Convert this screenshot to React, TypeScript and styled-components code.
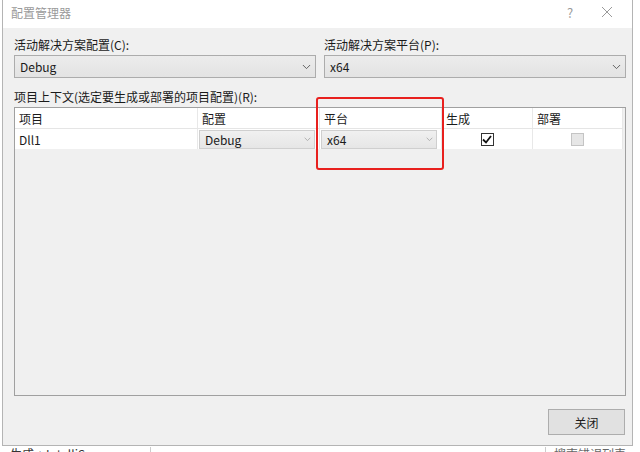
import React from 'react'
import styled, { createGlobalStyle } from 'styled-components'

const GlobalStyle = createGlobalStyle`
  html, body {
    margin: 0;
    padding: 0;
    background: #ffffff;
    overflow: hidden;
  }
  body {
    font-family: "Segoe UI", "Noto Sans CJK SC", "Noto Sans", sans-serif;
    font-size: 12px;
    color: #1a1a1a;
  }
`

// ---------- types ----------
type Column = { title: string }

type ProjectRow = {
  name: string
  config: string
  platform: string
  build: boolean
  deploy: boolean
}

const columns: Column[] = [
  { title: '项目' },
  { title: '配置' },
  { title: '平台' },
  { title: '生成' },
  { title: '部署' }
]

const rows: ProjectRow[] = [
  { name: 'Dll1', config: 'Debug', platform: 'x64', build: true, deploy: false }
]

// ---------- layout ----------
const Screen = styled.div`
  width: 640px;
  height: 452px;
  display: flex;
  flex-direction: column;
  overflow: hidden;
`

const Window = styled.div`
  position: relative;
  margin-left: 2px;
  width: 629px;
  height: 445px;
  flex-shrink: 0;
  display: flex;
  flex-direction: column;
  border: 1px solid #b4b4b4;
  border-top: none;
  background: #f0f0f0;
`

const TitleBar = styled.div`
  height: 28px;
  background: #ffffff;
  display: flex;
  align-items: center;
  padding-left: 8px;
  flex-shrink: 0;
`

const Title = styled.div`
  flex: 1;
  color: #9a9a9a;
  font-size: 12px;
  margin-top: -4px;
`

const TitleButton = styled.div<{ $w: number }>`
  width: ${p => p.$w}px;
  height: 28px;
  display: flex;
  align-items: center;
  justify-content: center;
  color: #9a9a9a;
  font-size: 13px;
  margin-top: -4px;
`

const Body = styled.div`
  flex: 1;
  display: flex;
  flex-direction: column;
  padding: 8px 5px 11px 11px;
`

const TopRow = styled.div`
  display: grid;
  grid-template-columns: 302px 302px;
  column-gap: 8px;
`

const Field = styled.div`
  display: flex;
  flex-direction: column;
`

const Label = styled.div`
  height: 17px;
  line-height: 17px;
  margin-bottom: 2px;
  white-space: nowrap;
`

const Combo = styled.div`
  height: 21px;
  border: 1px solid #acacac;
  background: linear-gradient(#ececec, #e3e3e3);
  display: flex;
  align-items: center;
  padding-left: 5px;
  padding-right: 4px;
  font-size: 12px;
`

const ComboText = styled.div`
  flex: 1;
`

const ContextLabel = styled(Label)`
  margin-top: 10px;
  margin-bottom: 2px;
`

const Grid = styled.div`
  width: 610px;
  height: 287px;
  border: 1px solid #a0a0a0;
  background: #f0f0f0;
  display: flex;
  flex-direction: column;
`

const GridRow = styled.div<{ $header?: boolean }>`
  display: grid;
  grid-template-columns: 183px 122px 122px 91px 1fr;
  height: 20px;
  background: #ffffff;
  margin-right: 2px;
  border-bottom: 1px solid ${p => (p.$header ? '#e5e5e5' : '#f0f0f0')};
`

const Cell = styled.div<{ $center?: boolean }>`
  display: flex;
  align-items: center;
  justify-content: ${p => (p.$center ? 'center' : 'flex-start')};
  padding-left: ${p => (p.$center ? 0 : 4)}px;
  border-right: 1px solid #e8e8e8;
  overflow: hidden;
  white-space: nowrap;
`

const CellCombo = styled.div`
  flex: 1;
  height: 17px;
  margin: 0 4px 0 -3px;
  border: 1px solid #cfcfcf;
  background: linear-gradient(#f0f0f0, #e6e6e6);
  display: flex;
  align-items: center;
  padding-left: 5px;
  padding-right: 3px;
`

const Check = styled.div<{ $disabled?: boolean }>`
  width: 11px;
  height: 11px;
  border: 1px solid ${p => (p.$disabled ? '#c4c4c4' : '#333333')};
  background: ${p => (p.$disabled ? '#e6e6e6' : '#ffffff')};
  display: flex;
  align-items: center;
  justify-content: center;
`

const Footer = styled.div`
  display: flex;
  justify-content: flex-end;
  margin-top: 13px;
  padding-right: 2px;
`

const Button = styled.div`
  width: 75px;
  height: 24px;
  border: 1px solid #adadad;
  background: #e1e1e1;
  display: flex;
  align-items: center;
  justify-content: center;
`

// red annotation drawn over the screenshot
const Highlight = styled.div`
  position: absolute;
  left: 313px;
  top: 97px;
  width: 124px;
  height: 69px;
  border: 2.5px solid #e8201e;
  border-radius: 3px;
  pointer-events: none;
`

// what shows of the IDE behind the dialog
const BackStrip = styled.div`
  height: 7px;
  display: flex;
  justify-content: space-between;
  overflow: hidden;
  background: #ffffff;
`

const BackCombo = styled.div`
  width: 140px;
  border-right: 1px solid #cccccc;
  padding-left: 10px;
  font-size: 12px;
  line-height: 13px;
  color: #333;
  white-space: nowrap;
  margin-top: 1px;
`

const BackSearch = styled.div`
  width: 86px;
  border-left: 1px solid #cccccc;
  padding-left: 8px;
  font-size: 12px;
  line-height: 13px;
  color: #666;
  white-space: nowrap;
  margin-top: 1px;
`

const Chevron = ({ size = 9, color = '#555' }: { size?: number; color?: string }) => (
  <svg width={size} height={size / 1.6} viewBox='0 0 10 6'>
    <path d='M1 1 L5 5 L9 1' fill='none' stroke={color} strokeWidth='1' />
  </svg>
)

const CheckMark = () => (
  <svg width='10' height='9' viewBox='0 0 10 9'>
    <path d='M1 4.5 L4 7.5 L9 1' fill='none' stroke='#111' strokeWidth='1.8' />
  </svg>
)

const CloseX = () => (
  <svg width='12' height='12' viewBox='0 0 12 12'>
    <path d='M1 1 L11 11 M11 1 L1 11' stroke='#9a9a9a' strokeWidth='1' />
  </svg>
)

const App = () => {
  return (
    <Screen>
      <GlobalStyle />
      <Window>
        <TitleBar>
          <Title>配置管理器</Title>
          <TitleButton $w={24}>?</TitleButton>
          <TitleButton $w={50}>
            <CloseX />
          </TitleButton>
        </TitleBar>
        <Body>
          <TopRow>
            <Field>
              <Label>活动解决方案配置(C):</Label>
              <Combo>
                <ComboText>Debug</ComboText>
                <Chevron />
              </Combo>
            </Field>
            <Field>
              <Label>活动解决方案平台(P):</Label>
              <Combo>
                <ComboText>x64</ComboText>
                <Chevron />
              </Combo>
            </Field>
          </TopRow>
          <ContextLabel>项目上下文(选定要生成或部署的项目配置)(R):</ContextLabel>
          <Grid>
            <GridRow $header>
              {columns.map(c => (
                <Cell key={c.title}>{c.title}</Cell>
              ))}
            </GridRow>
            {rows.map(r => (
              <GridRow key={r.name}>
                <Cell>{r.name}</Cell>
                <Cell>
                  <CellCombo>
                    <ComboText>{r.config}</ComboText>
                    <Chevron size={7} color='#999' />
                  </CellCombo>
                </Cell>
                <Cell>
                  <CellCombo>
                    <ComboText>{r.platform}</ComboText>
                    <Chevron size={7} color='#999' />
                  </CellCombo>
                </Cell>
                <Cell $center>
                  <Check>{r.build && <CheckMark />}</Check>
                </Cell>
                <Cell $center>
                  <Check $disabled={!r.deploy}>{r.deploy && <CheckMark />}</Check>
                </Cell>
              </GridRow>
            ))}
          </Grid>
          <Footer>
            <Button>关闭</Button>
          </Footer>
        </Body>
        <Highlight />
      </Window>
      <BackStrip>
        <BackCombo>生成 + IntelliSense</BackCombo>
        <BackSearch>搜索错误列表</BackSearch>
      </BackStrip>
    </Screen>
  )
}

export default App
